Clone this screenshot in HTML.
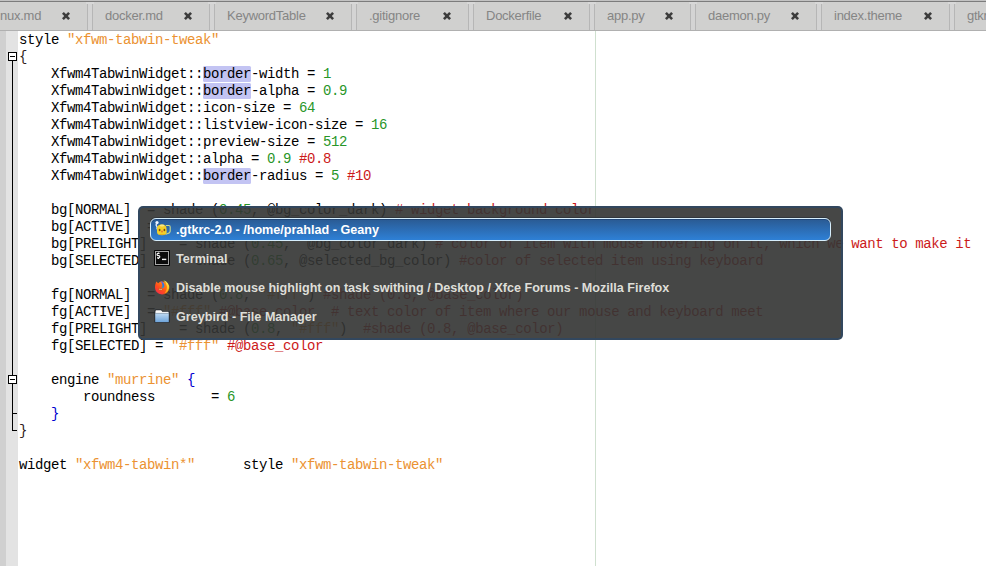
<!DOCTYPE html>
<html><head><meta charset="utf-8">
<style>
html,body{margin:0;padding:0;width:986px;height:566px;overflow:hidden;background:#fff;}
body{position:relative;font-family:"Liberation Sans",sans-serif;}
#tabs{position:absolute;left:0;top:0;width:986px;height:31px;background:#d0d0cf;}
#tabs .topband{position:absolute;left:0;top:0;width:986px;height:2px;background:#c2c2c2;border-bottom:1px solid #7c7c7c;box-sizing:border-box;}
#tabs .bottom{position:absolute;left:0;top:30px;width:986px;height:1px;background:#b0b0b0;}
.cap{position:absolute;top:2px;height:2px;width:8px;background:#d8d8d8;}
.sep{position:absolute;top:4px;height:26px;width:6px;background:#d4d4d4;border-left:1px solid #b6b6b6;border-right:1px solid #b6b6b6;box-sizing:border-box;}
.tt{position:absolute;top:7px;font-size:13px;letter-spacing:-0.25px;color:#858585;white-space:pre;line-height:17px;}
.tx{position:absolute;top:12px;width:8px;height:8px;}
.tx line{stroke:#3c3c3c;stroke-width:2.6;}
#gutter1{position:absolute;left:0;top:31px;width:6px;height:535px;background:#d0d0d0;}
#gutter2{position:absolute;left:6px;top:31px;width:12px;height:535px;background:#e3e3e3;}
#code{position:absolute;left:19px;top:32px;font-family:"Liberation Mono",monospace;font-size:14px;letter-spacing:-0.4px;line-height:17px;color:#000;}
#code div{height:17px;white-space:pre;}
.s{color:#eb9232}.n{color:#289628}.c{color:#cc1a1a}.b{color:#0000d0}.o{color:#302020}
.h{position:absolute;left:203px;width:48px;height:16px;background:#c3c4f3;border-radius:1.5px;}
#marker{position:absolute;left:595px;top:31px;width:1px;height:535px;background:#cfe0cf;}
.fold{position:absolute;left:8px;width:9px;height:9px;box-sizing:border-box;border:1px solid #000;background:#fff;}
.fold:after{content:"";position:absolute;left:1px;top:3px;width:5px;height:1px;background:#000;}
.vl{position:absolute;left:12px;width:1px;background:#000;}
.hl{position:absolute;left:12px;height:1px;width:5px;background:#000;}
#popup{position:absolute;left:138px;top:206px;width:705px;height:134px;box-sizing:border-box;background:rgba(52,53,52,0.91);border:2px solid rgba(50,72,96,0.95);border-radius:5px;}
.sel{position:absolute;left:150px;top:218px;width:681px;height:23px;box-sizing:border-box;border:1px solid #d6eefc;box-shadow:inset 0 1px 0 #23497a,0 -1px 0 rgba(30,40,50,0.5);border-radius:6px;background:linear-gradient(#2a5a92,#2e80d6);}
.pt{position:absolute;left:176px;font-size:12.6px;font-weight:bold;color:#deded8;white-space:pre;line-height:16px;}
</style></head><body>
<div id="tabs">
  <div class="topband"></div>
  <div class="bottom"></div>
  <div class="tt" style="left:0px">nux.md</div>
  <div class="cap" style="left:86px"></div><div class="sep" style="left:87px"></div>
  <div class="tt" style="left:105px">docker.md</div>
  <div class="cap" style="left:208px"></div><div class="sep" style="left:209px"></div>
  <div class="tt" style="left:227px">KeywordTable</div>
  <div class="cap" style="left:350px"></div><div class="sep" style="left:351px"></div>
  <div class="tt" style="left:369px">.gitignore</div>
  <div class="cap" style="left:467px"></div><div class="sep" style="left:468px"></div>
  <div class="tt" style="left:486px">Dockerfile</div>
  <div class="cap" style="left:588px"></div><div class="sep" style="left:589px"></div>
  <div class="tt" style="left:607px">app.py</div>
  <div class="cap" style="left:689px"></div><div class="sep" style="left:690px"></div>
  <div class="tt" style="left:708px">daemon.py</div>
  <div class="cap" style="left:815px"></div><div class="sep" style="left:816px"></div>
  <div class="tt" style="left:834px">index.theme</div>
  <div class="cap" style="left:948px"></div><div class="sep" style="left:949px"></div>
  <div class="tt" style="left:967px">gtkrc</div>
  <svg class="tx" style="left:62px" viewBox="0 0 8 8"><line x1="0.9" y1="0.9" x2="7.1" y2="7.1"/><line x1="7.1" y1="0.9" x2="0.9" y2="7.1"/></svg><svg class="tx" style="left:184px" viewBox="0 0 8 8"><line x1="0.9" y1="0.9" x2="7.1" y2="7.1"/><line x1="7.1" y1="0.9" x2="0.9" y2="7.1"/></svg><svg class="tx" style="left:326px" viewBox="0 0 8 8"><line x1="0.9" y1="0.9" x2="7.1" y2="7.1"/><line x1="7.1" y1="0.9" x2="0.9" y2="7.1"/></svg><svg class="tx" style="left:443px" viewBox="0 0 8 8"><line x1="0.9" y1="0.9" x2="7.1" y2="7.1"/><line x1="7.1" y1="0.9" x2="0.9" y2="7.1"/></svg><svg class="tx" style="left:564px" viewBox="0 0 8 8"><line x1="0.9" y1="0.9" x2="7.1" y2="7.1"/><line x1="7.1" y1="0.9" x2="0.9" y2="7.1"/></svg><svg class="tx" style="left:665px" viewBox="0 0 8 8"><line x1="0.9" y1="0.9" x2="7.1" y2="7.1"/><line x1="7.1" y1="0.9" x2="0.9" y2="7.1"/></svg><svg class="tx" style="left:791px" viewBox="0 0 8 8"><line x1="0.9" y1="0.9" x2="7.1" y2="7.1"/><line x1="7.1" y1="0.9" x2="0.9" y2="7.1"/></svg><svg class="tx" style="left:924px" viewBox="0 0 8 8"><line x1="0.9" y1="0.9" x2="7.1" y2="7.1"/><line x1="7.1" y1="0.9" x2="0.9" y2="7.1"/></svg>
</div>
<div id="gutter1"></div><div id="gutter2"></div>
<div id="marker"></div>
<div class="h" style="top:66px"></div><div class="h" style="top:83px"></div><div class="h" style="top:168px"></div>
<div id="code"><div>style <span class="s">"xfwm-tabwin-tweak"</span></div>
<div><span class="o">{</span></div>
<div>    Xfwm4TabwinWidget::border-width = <span class="n">1</span></div>
<div>    Xfwm4TabwinWidget::border-alpha = <span class="n">0.9</span></div>
<div>    Xfwm4TabwinWidget::icon-size = <span class="n">64</span></div>
<div>    Xfwm4TabwinWidget::listview-icon-size = <span class="n">16</span></div>
<div>    Xfwm4TabwinWidget::preview-size = <span class="n">512</span></div>
<div>    Xfwm4TabwinWidget::alpha = <span class="n">0.9</span> <span class="c">#0.8</span></div>
<div>    Xfwm4TabwinWidget::border-radius = <span class="n">5</span> <span class="c">#10</span></div>
<div> </div>
<div>    bg[NORMAL]  = shade (<span class="n">0.45</span>, @bg_color_dark) <span class="c"># widget background color</span></div>
<div>    bg[ACTIVE]  = shade (<span class="n">0.45</span>, @bg_color_dark)</div>
<div>    bg[PRELIGHT]    = shade (<span class="n">0.45</span>,  @bg_color_dark) <span class="c"># color of item with mouse hovering on it, which we want to make it</span></div>
<div>    bg[SELECTED]    = shade (<span class="n">0.65</span>, @selected_bg_color) <span class="c">#color of selected item using keyboard</span></div>
<div> </div>
<div>    fg[NORMAL]  = shade (<span class="n">0.8</span>, <span class="s">"#fff"</span>) <span class="c">#shade (0.8, @base_color)</span></div>
<div>    fg[ACTIVE]  = <span class="s">"#fff"</span> <span class="c">#@base_color  # text color of item where our mouse and keyboard meet</span></div>
<div>    fg[PRELIGHT]    = shade (<span class="n">0.8</span>, <span class="s">"#fff"</span>)  <span class="c">#shade (0.8, @base_color)</span></div>
<div>    fg[SELECTED] = <span class="s">"#fff"</span> <span class="c">#@base_color</span></div>
<div> </div>
<div>    engine <span class="s">"murrine"</span> <span class="b">{</span></div>
<div>        roundness       = <span class="n">6</span></div>
<div>    <span class="b">}</span></div>
<div><span class="o">}</span></div>
<div> </div>
<div>widget <span class="s">"xfwm4-tabwin*"</span>      style <span class="s">"xfwm-tabwin-tweak"</span></div>
</div>
<div class="fold" style="top:52px"></div>
<div class="vl" style="top:61px;height:314px"></div>
<div class="fold" style="top:375px"></div>
<div class="vl" style="top:384px;height:46px"></div>
<div class="hl" style="top:413px"></div>
<div class="hl" style="top:430px"></div>
<div id="popup"></div>
<div class="sel"></div>


<svg style="position:absolute;left:154px;top:220px" width="17" height="17" viewBox="0 0 17 17">
 <circle cx="3" cy="2.6" r="1.6" fill="#f2f6ff"/><path d="M2.6 3.5 q-1.2 1.5 0.2 3 q1 1.2 0 2.8" fill="none" stroke="#e8f0ff" stroke-width="1.3"/>
 <path d="M12 5.5 h2.8 q1.4 0 1.4 1.5 v4 q0 2 -2.5 2.5 l-2 0.8" fill="none" stroke="#c8d890" stroke-width="1.1"/>
 <path d="M3 8.5 q0 -4 5 -4 q4.5 0 4.5 4 l0.2 3.5 q0 3.3 -4.7 3.3 q-5 0 -5 -3.3z" fill="#f2cf2a"/>
 <ellipse cx="8" cy="5.5" rx="2.3" ry="1" fill="#f8e888"/>
 <ellipse cx="5.6" cy="10" rx="0.9" ry="1.3" fill="#7a4a10"/>
 <ellipse cx="10.4" cy="10" rx="0.9" ry="1.3" fill="#7a4a10"/>
 <ellipse cx="8" cy="11.5" rx="1" ry="1.1" fill="#e87a30"/>
 <path d="M5 14.5 h6" stroke="#e0b020" stroke-width="1"/>
</svg>
<svg style="position:absolute;left:154px;top:250px" width="16" height="16" viewBox="0 0 16 16">
 <rect x="0" y="0" width="16" height="16" rx="1" fill="#050505"/>
 <rect x="1" y="1" width="14" height="14" fill="#a6a6a6"/>
 <rect x="2" y="2" width="12" height="12" fill="#0c0c0c"/>
 <path d="M5.6 3.4 h-1.6 q-1 0 -1 1.1 q0 1 1 1.1 h0.8 q1 0 1 1.1 q0 1.1 -1 1.1 h-1.8 M4.4 2.6 v1 M4.4 7.9 v1" fill="none" stroke="#f4f4f4" stroke-width="1.2"/>
 <rect x="8" y="8.7" width="4.3" height="1.4" fill="#f4f4f4"/>
</svg>
<svg style="position:absolute;left:154px;top:279px" width="16" height="16" viewBox="0 0 16 16">
 <defs>
  <linearGradient id="ffo" x1="0" y1="1" x2="0.8" y2="0"><stop offset="0" stop-color="#f0245a"/><stop offset="0.45" stop-color="#ff4a1e"/><stop offset="1" stop-color="#ff9a10"/></linearGradient>
  <linearGradient id="ffy" x1="0" y1="0" x2="0" y2="1"><stop offset="0" stop-color="#fff35a"/><stop offset="0.6" stop-color="#ffc020"/><stop offset="1" stop-color="#ff8a10"/></linearGradient>
  <linearGradient id="ffb" x1="0" y1="0" x2="0" y2="1"><stop offset="0" stop-color="#7a5ad8"/><stop offset="0.5" stop-color="#2a78e0"/><stop offset="1" stop-color="#30a0c0"/></linearGradient>
 </defs>
 <path d="M2.2 2.4 L4.2 4.2 Q5.5 3 7.5 2.6 Q13 2.5 14.6 8.5 Q14.6 15.2 8 15.4 Q1.2 15 1 8.6 Q1 5.5 2.2 2.4z" fill="url(#ffo)"/>
 <path d="M6.2 2.3 Q9.8 2.2 10.4 6.2 Q10.5 9.2 7.4 9.4 Q9.2 7.5 8 4.5 Q7.4 3 6.2 2.3z" fill="url(#ffb)"/>
 <path d="M9.4 1.3 Q15.8 3.4 15.2 9.6 Q14.3 14.4 9.8 15 Q13.4 11.6 12.9 7.2 Q12.4 3.6 9.4 1.3z" fill="url(#ffy)"/>
 <path d="M15.2 9.6 Q14.3 14.4 9.8 15" fill="none" stroke="#5a3a10" stroke-width="0.6" opacity="0.6"/>
 <path d="M4.2 9.2 Q6.5 8.6 8.8 10 Q8 11.8 6 11.6 Q4.8 11 4.2 9.2z" fill="#d2601a"/>
 <path d="M5 10.2 Q6.8 10.6 8 10.4" fill="none" stroke="#f8c8a0" stroke-width="0.7"/>
</svg>
<svg style="position:absolute;left:154px;top:309px" width="16" height="14" viewBox="0 0 16 14">
 <defs><linearGradient id="fld" x1="0" y1="0" x2="0" y2="1"><stop offset="0" stop-color="#bcd8f2"/><stop offset="1" stop-color="#6ea4da"/></linearGradient></defs>
 <path d="M0.5 2 q0 -1.5 1.5 -1.5 h5.5 l1 1.5 h6.3 q0.8 0 0.8 0.8 v10.7 h-15.1z" fill="#1c2228"/>
 <path d="M1.4 2.4 q0 -1.1 1 -1.1 h4.8 l1 1.5 h6.4 v1.4 h-13.2z" fill="#f8f8f8"/>
 <rect x="1.2" y="3.9" width="13.6" height="0.6" fill="#9ab0c4"/>
 <rect x="1.2" y="4.5" width="13.6" height="8.6" fill="url(#fld)"/>
</svg>
<div class="pt" style="top:222px;color:#fff">.gtkrc-2.0 - /home/prahlad - Geany</div>
<div class="pt" style="top:251px">Terminal</div>
<div class="pt" style="top:280px">Disable mouse highlight on task swithing / Desktop / Xfce Forums - Mozilla Firefox</div>
<div class="pt" style="top:309px">Greybird - File Manager</div>
</body></html>
